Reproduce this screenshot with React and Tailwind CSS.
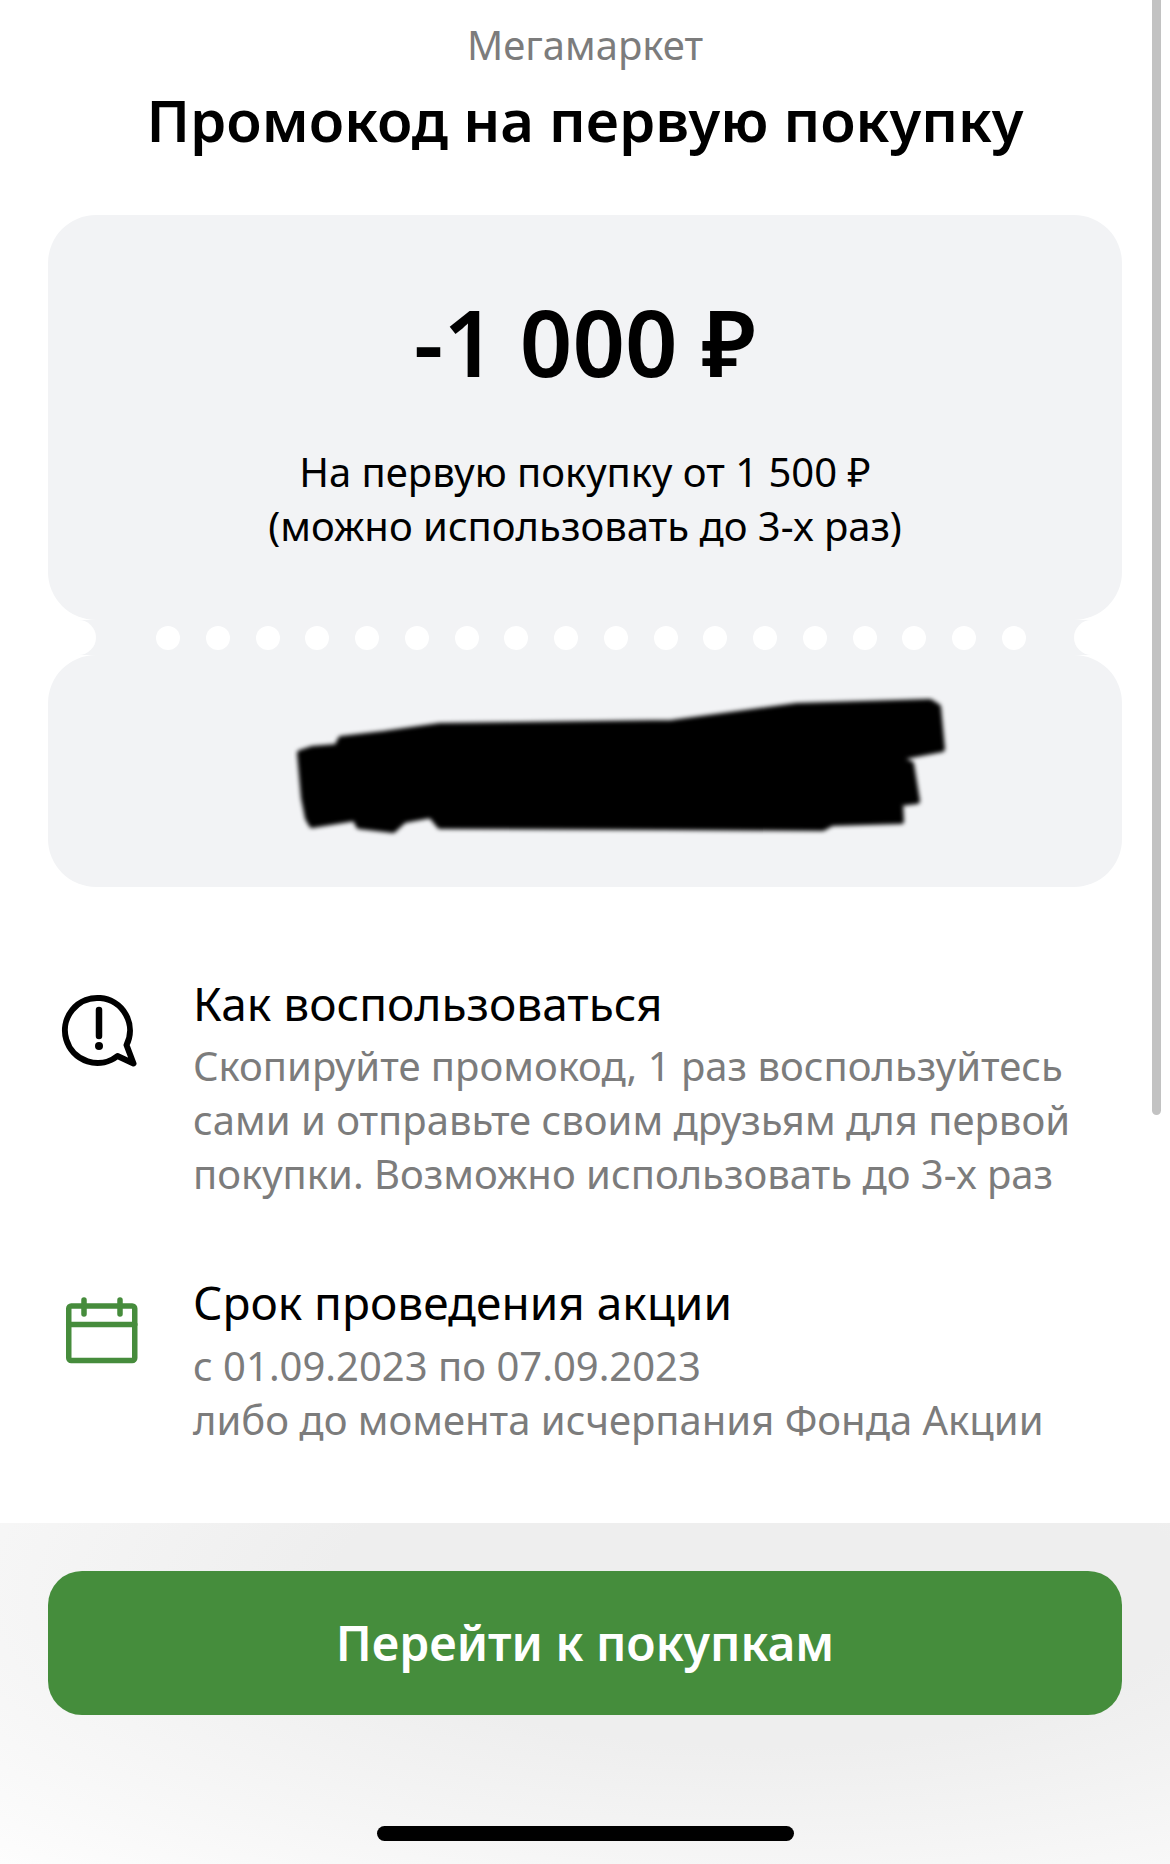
const Dots = Array.from({ length: 18 })

// ── Icons ─────────────────────────────────────────────────────────────────────
const AlertBubbleIcon = () => (
  <svg width="75" height="73" viewBox="0 0 75 73" fill="none" stroke="#000" strokeWidth="6" strokeLinejoin="round" strokeLinecap="round" className="shrink-0 overflow-visible">
    <path d="M54.5 63 A32.5 32.5 0 1 1 63.5 52 L70.5 70.5 Z" />
    <path d="M36 17 V43" strokeWidth="6.5" />
    <circle cx="36" cy="53" r="4" fill="#000" stroke="none" />
  </svg>
)

const CalendarIcon = () => (
  <svg width="75" height="67" viewBox="0 0 75 67" fill="none" stroke="#468c3c" strokeWidth="5.5" strokeLinecap="round" strokeLinejoin="round" className="shrink-0">
    <rect x="5.75" y="9" width="66" height="54.5" rx="2.5" />
    <path d="M5.75 27.5 H71.75" />
    <path d="M21 3 V17 M57 3 V17" />
  </svg>
)

// marker scribble that hides the code
const Scribble = () => (
  <svg width="660" height="144" viewBox="293 694 660 144" className="block">
    <defs>
      <filter id="soft" x="-5%" y="-10%" width="110%" height="120%">
        <feGaussianBlur stdDeviation="2.2" />
      </filter>
    </defs>
    <path
      filter="url(#soft)"
      fill="#000"
      stroke="#000"
      strokeWidth="6"
      strokeLinejoin="round"
      d="M300 752 L312 748 L337 746 L341 738 L384 733 L440 725 L672 722 L797 705 L930 701 L938 706 L942 748 L895 757 L911 763 L917 800 L900 802 L901 820 L832 822 L823 827 L663 826 L440 825 L431 814 L404 819 L393 829 L359 825 L355 817 L312 824 L308 817 L304 797 Z"
    />
  </svg>
)

// ── Ticket ────────────────────────────────────────────────────────────────────
function Ticket() {
  return (
    <div className="mx-[48px] mt-[57px]">
      <div className="h-[405px] rounded-[48px] bg-[#f2f3f5] flex flex-col items-center pt-[81px]">
        <div className="text-[92px] leading-[92px] font-semibold text-black">-1 000 ₽</div>
        <div className="mt-[57px] text-[40px] leading-[54px] text-black text-center">
          <p>На первую покупку от 1 500 ₽</p>
          <p>(можно использовать до 3-х раз)</p>
        </div>
      </div>
      <div className="relative mx-[31px] h-[35px] bg-[#f2f3f5] flex items-center justify-between pl-[77px] pr-[65px]">
        <span className="absolute -left-[18px] top-0 w-[35px] h-[35px] rounded-full bg-white" />
        {Dots.map((_, i) => (
          <span key={i} className="w-[24px] h-[24px] rounded-full bg-white" />
        ))}
        <span className="absolute -right-[18px] top-0 w-[35px] h-[35px] rounded-full bg-white" />
      </div>
      <div className="h-[232px] rounded-[48px] bg-[#f2f3f5] pl-[245px] pt-[40px]">
        <Scribble />
      </div>
    </div>
  )
}

// ── Page ──────────────────────────────────────────────────────────────────────
export default function App() {
  return (
    <div className="relative w-[1170px] h-[1864px] bg-white overflow-hidden flex flex-col font-['Noto_Sans',sans-serif]">
      <div className="absolute right-[9px] top-0 w-[9px] h-[1115px] rounded-b-full bg-[#c2c2c2]" />

      <header className="text-center pt-[22px]">
        <div className="text-[40px] leading-[46px] text-[#7c7c7c]">Мегамаркет</div>
        <h1 className="mt-[14px] text-[58px] leading-[76px] font-semibold text-black">Промокод на первую покупку</h1>
      </header>

      <Ticket />

      <section className="flex-1 mt-[89px] pl-[63px] pr-[60px]">
        <div className="flex gap-[55px]">
          <div className="pt-[17px]"><AlertBubbleIcon /></div>
          <div className="text-[40px] leading-[54px]">
            <h2 className="text-[46px] text-black">Как воспользоваться</h2>
            <p className="mt-[9px] text-[#7c7c7c]">Скопируйте промокод, 1 раз воспользуйтесь</p>
            <p className="text-[#7c7c7c]">сами и отправьте своим друзьям для первой</p>
            <p className="text-[#7c7c7c]">покупки. Возможно использовать до 3-х раз</p>
          </div>
        </div>
        <div className="flex gap-[55px] mt-[74px]">
          <div className="pt-[22px]"><CalendarIcon /></div>
          <div className="text-[40px] leading-[54px]">
            <h2 className="text-[46px] text-black">Срок проведения акции</h2>
            <p className="mt-[10px] text-[#7c7c7c]">с 01.09.2023 по 07.09.2023</p>
            <p className="text-[#7c7c7c]">либо до момента исчерпания Фонда Акции</p>
          </div>
        </div>
      </section>

      <footer className="h-[341px] px-[48px] pt-[48px] flex flex-col items-center bg-[radial-gradient(ellipse_at_65%_20%,#eeeeee_40%,#fdfdfd_100%)]">
        <button className="w-full h-[144px] rounded-[34px] bg-[#458d3c] text-white text-[48px] font-semibold">Перейти к покупкам</button>
        <div className="mt-[111px] w-[417px] h-[15px] rounded-full bg-black" />
      </footer>
    </div>
  )
}
